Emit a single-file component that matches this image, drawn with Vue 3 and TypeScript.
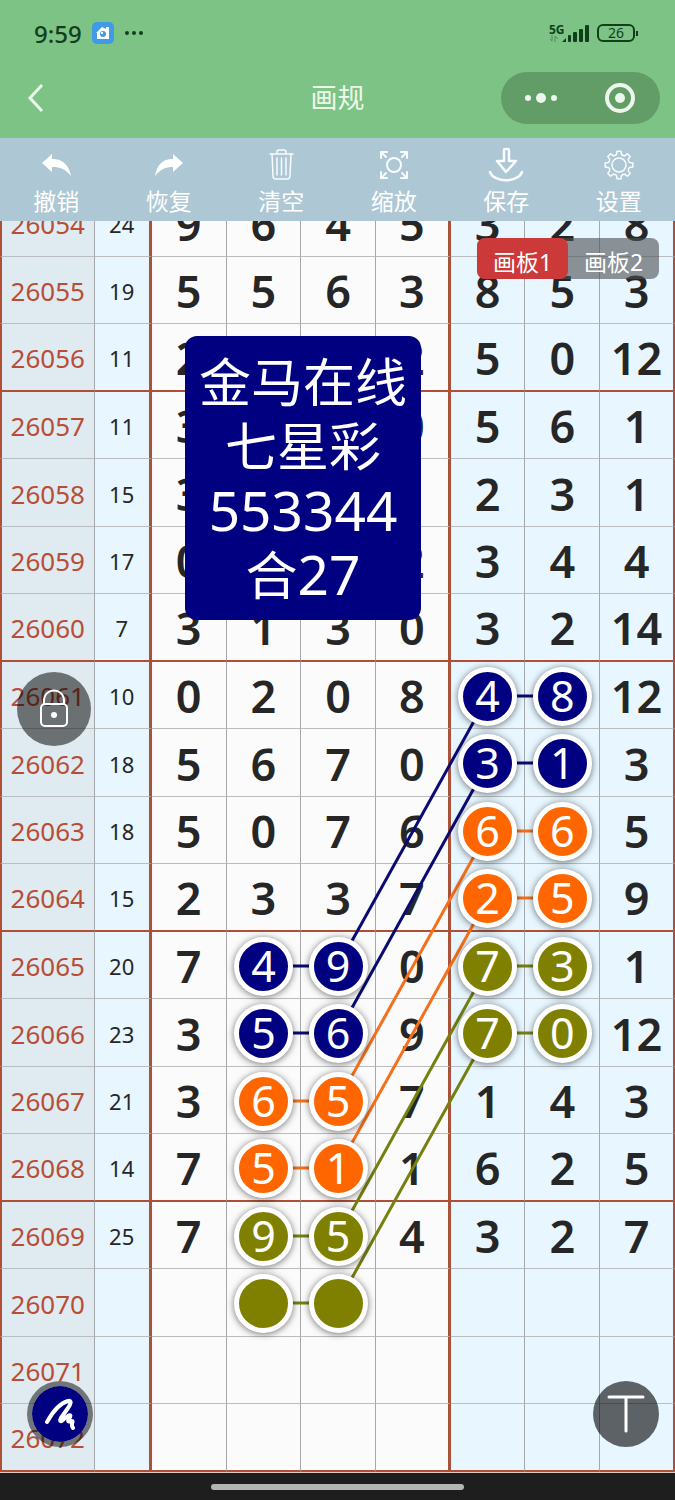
<script setup lang="ts">
import { ref } from 'vue'

type Tone = 'navy' | 'orange' | 'olive'

interface Row {
  id: string
  sum: string
  cells: string[]
}

interface Link {
  from: [number, number]
  to: [number, number]
  tone: Tone
}

const COLUMN_CENTERS = [188, 263, 338, 413, 488, 563, 638]
const ROW_PITCH = 67.5

const rows: Row[] = [
  { id: '26054', sum: '24', cells: ['9', '6', '4', '5', '3', '2', '8'] },
  { id: '26055', sum: '19', cells: ['5', '5', '6', '3', '8', '5', '3'] },
  { id: '26056', sum: '11', cells: ['2', '', '', '2', '5', '0', '12'] },
  { id: '26057', sum: '11', cells: ['3', '', '', '0', '5', '6', '1'] },
  { id: '26058', sum: '15', cells: ['3', '', '', '', '2', '3', '1'] },
  { id: '26059', sum: '17', cells: ['0', '', '', '2', '3', '4', '4'] },
  { id: '26060', sum: '7', cells: ['3', '1', '3', '0', '3', '2', '14'] },
  { id: '26061', sum: '10', cells: ['0', '2', '0', '8', '4', '8', '12'] },
  { id: '26062', sum: '18', cells: ['5', '6', '7', '0', '3', '1', '3'] },
  { id: '26063', sum: '18', cells: ['5', '0', '7', '6', '6', '6', '5'] },
  { id: '26064', sum: '15', cells: ['2', '3', '3', '7', '2', '5', '9'] },
  { id: '26065', sum: '20', cells: ['7', '4', '9', '0', '7', '3', '1'] },
  { id: '26066', sum: '23', cells: ['3', '5', '6', '9', '7', '0', '12'] },
  { id: '26067', sum: '21', cells: ['3', '6', '5', '7', '1', '4', '3'] },
  { id: '26068', sum: '14', cells: ['7', '5', '1', '1', '6', '2', '5'] },
  { id: '26069', sum: '25', cells: ['7', '9', '5', '4', '3', '2', '7'] },
  { id: '26070', sum: '', cells: ['', '', '', '', '', '', ''] },
  { id: '26071', sum: '', cells: ['', '', '', '', '', '', ''] },
  { id: '26072', sum: '', cells: ['', '', '', '', '', '', ''] },
]

// Each pair starts at a row and column and covers two neighbouring cells.
const pairs: { row: number; col: number; tone: Tone }[] = [
  { row: 7, col: 4, tone: 'navy' },
  { row: 8, col: 4, tone: 'navy' },
  { row: 9, col: 4, tone: 'orange' },
  { row: 10, col: 4, tone: 'orange' },
  { row: 11, col: 4, tone: 'olive' },
  { row: 12, col: 4, tone: 'olive' },
  { row: 11, col: 1, tone: 'navy' },
  { row: 12, col: 1, tone: 'navy' },
  { row: 13, col: 1, tone: 'orange' },
  { row: 14, col: 1, tone: 'orange' },
  { row: 15, col: 1, tone: 'olive' },
  { row: 16, col: 1, tone: 'olive' },
]

const links: Link[] = [
  ...pairs.map((p): Link => ({ from: [p.row, p.col], to: [p.row, p.col + 1], tone: p.tone })),
  ...pairs.slice(0, 6).map((p): Link => ({ from: [p.row, p.col], to: [p.row + 4, 2], tone: p.tone })),
]

function toneOf(row: number, col: number): Tone | undefined {
  return pairs.find((p) => p.row === row && (p.col === col || p.col + 1 === col))?.tone
}

const cx = (col: number) => COLUMN_CENTERS[col]
const cy = (row: number) => Math.round(ROW_PITCH * row + 34)

// Outline of an eight-toothed gear centred in a 36-unit box.
function gearPath(): string {
  const at = (radius: number, degrees: number) => {
    const a = (degrees * Math.PI) / 180
    return `${(18 + radius * Math.cos(a)).toFixed(2)} ${(18 + radius * Math.sin(a)).toFixed(2)}`
  }
  let d = ''
  for (let k = 0; k < 8; k++) {
    const a = k * 45
    d += `${k ? 'L' : 'M'}${at(11, a - 13)} L${at(14, a - 8)} L${at(14, a + 8)} L${at(11, a + 13)} `
    d += `Q${at(9.6, a + 22.5)} ${at(11, a + 32)} `
  }
  return d + 'Z'
}
const gear = gearPath()

const board = ref(1)
</script>

<template>
  <main class="screen">
    <header class="header">
      <div class="status">
        <div class="status-side">
          <span class="clock">9:59</span>
          <svg class="app-badge" viewBox="0 0 22 22" aria-hidden="true">
            <rect width="22" height="22" rx="5" fill="#3f9ae8" />
            <path d="M4 11 L10 5 L14 7 V5 H17 V17 H5 V11 Z" fill="#fff" />
            <circle cx="11" cy="12" r="3" fill="#3f9ae8" />
            <path d="M9 10 H11 V12 H9 Z" fill="#fff" />
          </svg>
          <svg class="more" viewBox="0 0 20 6" aria-hidden="true">
            <circle cx="3" cy="3" r="2" /><circle cx="10" cy="3" r="2" /><circle cx="17" cy="3" r="2" />
          </svg>
        </div>
        <div class="status-side right">
          <div class="network">
            <span class="net-label">5G</span>
            <svg class="arrows" viewBox="0 0 10 7" aria-hidden="true">
              <path d="M3 0 V6 L1 4 M6 7 V1 L9 4" fill="none" stroke="#4f8a58" />
            </svg>
          </div>
          <svg class="bars" viewBox="0 0 28 18" aria-hidden="true">
            <path d="M1 18 L5 14 V18 Z" />
            <rect x="7" y="11" width="3" height="7" rx="1" />
            <rect x="12" y="8" width="4" height="10" rx="1" />
            <rect x="18" y="5" width="4" height="13" rx="1" />
            <rect x="24" y="1" width="4" height="17" rx="1" />
          </svg>
          <span class="battery">26</span>
        </div>
      </div>
      <div class="nav">
        <button class="back" aria-label="返回">
          <svg viewBox="0 0 18 30" aria-hidden="true"><path d="M15 2 L3 15 L15 28" /></svg>
        </button>
        <h1>画规</h1>
        <div class="capsule">
          <button aria-label="更多">
            <svg class="dots" viewBox="0 0 32 10" aria-hidden="true">
              <circle cx="3" cy="5" r="3" /><circle cx="16" cy="5" r="5" /><circle cx="29" cy="5" r="3" />
            </svg>
          </button>
          <button aria-label="关闭">
            <svg class="target" viewBox="0 0 30 30" aria-hidden="true">
              <circle cx="15" cy="15" r="13" fill="none" stroke="#edf6ec" stroke-width="4" />
              <circle cx="15" cy="15" r="5" fill="#edf6ec" />
            </svg>
          </button>
        </div>
      </div>
    </header>

    <nav class="toolbar">
      <button>
        <svg viewBox="0 0 36 36" aria-hidden="true">
          <path class="solid" d="M4 16 L14 7 V12 C25 12 31 18 33 29 C27 22 23 20 14 20 V25 Z" />
        </svg>
        <span>撤销</span>
      </button>
      <button>
        <svg viewBox="0 0 36 36" aria-hidden="true">
          <path class="solid" d="M32 16 L22 7 V12 C11 12 6 18 4 29 C10 22 14 20 22 20 V25 Z" />
        </svg>
        <span>恢复</span>
      </button>
      <button>
        <svg class="fine" viewBox="0 0 36 36" aria-hidden="true">
          <path d="M7 7 H30 M14 7 V5 Q14 3 16 3 H21 Q23 3 23 5 V7 M9 7 L10 29 Q10 32 13 32 H24 Q27 32 27 29 L28 7 M14 11 V28 M18.500 11 V28 M23 11 V28" />
        </svg>
        <span>清空</span>
      </button>
      <button>
        <svg viewBox="0 0 36 36" aria-hidden="true">
          <circle cx="18" cy="18" r="7" />
          <path d="M5 11 V5 H11 M5 5 L10 10 M25 5 H31 V11 M31 5 L26 10 M5 25 V31 H11 M5 31 L10 26 M31 25 V31 H25 M31 31 L26 26" />
        </svg>
        <span>缩放</span>
      </button>
      <button>
        <svg viewBox="0 0 36 36" aria-hidden="true">
          <path class="bold" d="M16 3 Q16 2 18 2 H19 Q21 2 21 3 V14 H28 L18 25 L9 14 H16 Z M2 25 C6 36 30 36 34 25" />
        </svg>
        <span>保存</span>
      </button>
      <button>
        <svg class="fine" viewBox="0 0 36 36" aria-hidden="true">
          <circle cx="18" cy="18" r="7" />
          <path :d="gear" />
        </svg>
        <span>设置</span>
      </button>
    </nav>

    <section class="board">
      <div class="sheet">
        <table>
          <colgroup>
            <col class="col-id" />
            <col class="col-sum" />
            <col span="7" />
          </colgroup>
          <tbody>
            <tr v-for="(row, r) in rows" :key="row.id" :class="{ divider: r % 4 === 2 }">
              <th scope="row">{{ row.id }}</th>
              <td class="sum">{{ row.sum }}</td>
              <td v-for="(cell, c) in row.cells" :key="c" :class="{ tail: c > 3, edge: c === 3 || c === 6 }">
                <span v-if="toneOf(r, c)" class="ball" :class="toneOf(r, c)">{{ cell }}</span>
                <template v-else>{{ cell }}</template>
              </td>
            </tr>
          </tbody>
        </table>
        <svg class="links" viewBox="0 0 675 1283" preserveAspectRatio="none" aria-hidden="true">
          <line
            v-for="(link, i) in links"
            :key="i"
            :class="link.tone"
            :x1="cx(link.from[1])"
            :y1="cy(link.from[0])"
            :x2="cx(link.to[1])"
            :y2="cy(link.to[0])"
          />
        </svg>
      </div>

      <div class="tabs">
        <button :class="{ active: board === 1 }" @click="board = 1">画板1</button>
        <button :class="{ active: board === 2 }" @click="board = 2">画板2</button>
      </div>

      <div class="note">
        <p>金马在线</p>
        <p>七星彩</p>
        <p><span class="digits">553344</span></p>
        <p>合<span class="digits">27</span></p>
      </div>

      <button class="float lock" aria-label="锁定">
        <svg viewBox="0 0 30 40" aria-hidden="true">
          <path d="M5 15 V12 C5 -2 25 -2 25 12 V15" />
          <rect x="2" y="15" width="26" height="22" rx="4" />
          <circle cx="15" cy="26" r="3" />
        </svg>
      </button>
      <button class="float pen" aria-label="画笔">
        <svg viewBox="0 0 32 32" aria-hidden="true">
          <path d="M3 24 C8 15 16 5 24 3 C28 2 27 6 24 10 L17 20 C15 24 17 24 20 21 L24 18 C27 16 27 18 25 21 C23 24 25 24 28 23 C30 23 26 26 29 30" />
        </svg>
      </button>
      <button class="float text" aria-label="文字">
        <svg viewBox="0 0 38 38" aria-hidden="true"><path d="M2 2 H36 M19 2 V36" /></svg>
      </button>
    </section>

    <footer class="home"><span></span></footer>
  </main>
</template>

<style>
body {
  margin: 0;
}
</style>

<style scoped>
.screen {
  display: flex;
  flex-direction: column;
  min-height: 100vh;
  background: #fbfbfb;
  font-family: "Noto Sans", "Noto Sans CJK SC", sans-serif;
  color: #262626;
}
button {
  margin: 0;
  padding: 0;
  border: 0;
  background: none;
  color: inherit;
  font: inherit;
  cursor: pointer;
}
.header {
  background: #7dc385;
}
.status {
  display: flex;
  justify-content: space-between;
  align-items: center;
  height: 58px;
  padding: 8px 40px 0 34px;
  box-sizing: border-box;
  color: #123f1b;
}
.status-side {
  display: flex;
  align-items: center;
  gap: 10px;
}
.status-side.right {
  gap: 8px;
}
.clock {
  font-size: 24px;
  font-weight: 500;
}
.app-badge {
  width: 22px;
  height: 22px;
}
.more {
  width: 20px;
  height: 6px;
  fill: #123f1b;
}
.network {
  display: flex;
  flex-direction: column;
  width: 18px;
  margin-right: -14px;
}
.net-label {
  font-size: 12px;
  line-height: 11px;
  font-weight: 700;
}
.arrows {
  width: 10px;
  height: 7px;
}
.bars {
  width: 28px;
  height: 18px;
  fill: #123f1b;
}
.battery {
  position: relative;
  width: 34px;
  border: 2px solid #123f1b;
  border-radius: 6px;
  font-size: 14px;
  line-height: 14px;
  text-align: center;
}
.battery::after {
  content: "";
  position: absolute;
  top: 5px;
  right: -5px;
  width: 2px;
  height: 5px;
  background: #123f1b;
}
.nav {
  display: grid;
  grid-template-columns: 1fr auto 1fr;
  align-items: center;
  height: 80px;
  padding: 0 15px;
}
.back {
  display: flex;
  justify-self: start;
  padding-left: 12px;
}
.back svg {
  width: 18px;
  height: 30px;
  fill: none;
  stroke: #edf8ea;
  stroke-width: 3;
}
h1 {
  margin: 0;
  color: #edf8ea;
  font-size: 27px;
  font-weight: 400;
  line-height: 40px;
}
.capsule {
  display: flex;
  justify-self: end;
  width: 159px;
  height: 52px;
  border-radius: 26px;
  background: #629d68;
}
.capsule button {
  display: flex;
  flex: 1;
  align-items: center;
  justify-content: center;
}
.dots {
  width: 32px;
  height: 10px;
  fill: #edf6ec;
}
.target {
  width: 30px;
  height: 30px;
}
.toolbar {
  position: relative;
  z-index: 3;
  display: grid;
  grid-template-columns: repeat(6, 1fr);
  height: 83px;
  background: #adc7d4;
  color: #fff;
}
.toolbar button {
  display: flex;
  flex-direction: column;
  align-items: center;
  padding-top: 9px;
  font-size: 23px;
  line-height: 36px;
}
.toolbar svg {
  width: 36px;
  height: 36px;
  flex: none;
  fill: none;
  stroke: #f8fcff;
  stroke-width: 2;
  stroke-linejoin: round;
  stroke-linecap: round;
}
.toolbar svg.fine {
  stroke-width: 1.5;
}
.toolbar .solid {
  fill: #fff;
  stroke: none;
}
.toolbar .bold {
  stroke-width: 2.5;
}
.board {
  position: relative;
  flex: 1;
  overflow: hidden;
}
.sheet {
  position: relative;
  margin-top: -32px;
}
table {
  width: 100%;
  table-layout: fixed;
  border-collapse: separate;
  border-spacing: 0;
}
.col-id {
  width: 14%;
}
.col-sum {
  width: 8.5%;
}
tr {
  height: 67px;
}
tr:nth-child(odd) {
  height: 68px;
}
th,
td {
  box-sizing: border-box;
  padding: 2px 0 0;
  border-right: 1px solid #a4a8aa;
  border-bottom: 1px solid #b9bdbf;
  text-align: center;
  vertical-align: middle;
  font-size: 45px;
  line-height: 60px;
  font-weight: 600;
}
th {
  border-left: 2px solid #b04f36;
  background: #e0eaf1;
  color: #b84d36;
  font-size: 26px;
  font-weight: 400;
}
td.sum {
  border-right: 3px solid #a9523a;
  background: #e7f6ff;
  font-size: 22px;
  font-weight: 400;
}
td.tail {
  background: #e7f6ff;
}
td.edge {
  border-right: 3px solid #a9523a;
}
td.edge:last-child {
  border-right-width: 2px;
}
.divider th,
.divider td {
  border-bottom: 2px solid #b04f36;
}
.ball {
  position: relative;
  z-index: 2;
  display: block;
  box-sizing: border-box;
  width: 59px;
  height: 59px;
  margin: 0 auto;
  border: 5px solid #fff;
  border-radius: 50%;
  box-shadow: 0 1px 7px rgba(0, 0, 0, 0.55);
  color: #fff;
  font-weight: 400;
  font-size: 43px;
  line-height: 48px;
}
.ball.navy {
  background: #000080;
}
.ball.orange {
  background: #ff6600;
}
.ball.olive {
  background: #808000;
}
.links {
  position: absolute;
  z-index: 1;
  inset: 0;
  width: 100%;
  height: 100%;
  pointer-events: none;
}
.links line {
  stroke-width: 3;
  vector-effect: non-scaling-stroke;
}
.links .navy {
  stroke: #0a0a72;
}
.links .orange {
  stroke: #f5701c;
}
.links .olive {
  stroke: #75800f;
}
.tabs {
  position: absolute;
  z-index: 3;
  top: 17px;
  right: 16px;
  display: flex;
  border-radius: 8px;
  background: rgba(75, 78, 82, 0.6);
  color: #fff;
  font-size: 23px;
  line-height: 41px;
}
.tabs button {
  height: 41px;
  width: 91px;
  padding-top: 4px;
  border-radius: 8px;
}
.tabs .active {
  background: #cc3939;
}
.note {
  position: absolute;
  z-index: 3;
  top: 115px;
  left: 185px;
  padding: 14px;
  border-radius: 12px;
  background: #000080;
  color: #fff;
  font-size: 52px;
  line-height: 64px;
  text-align: center;
}
.note p {
  margin: 0;
  height: 64px;
}
.digits {
  font-size: 55px;
}
.float {
  position: absolute;
  z-index: 3;
  display: flex;
  align-items: center;
  justify-content: center;
  box-sizing: border-box;
  width: 66px;
  height: 66px;
  border-radius: 50%;
  background: rgba(0, 0, 0, 0.6);
}
.float svg {
  width: 38px;
  height: 38px;
  fill: none;
  stroke: #fff;
  stroke-width: 3;
  stroke-linecap: round;
  stroke-linejoin: round;
}
.lock {
  top: 451px;
  left: 17px;
  width: 74px;
  height: 74px;
  background: rgba(0, 0, 0, 0.52);
}
.lock svg {
  width: 30px;
  height: 40px;
  stroke-width: 2;
}
.lock svg circle {
  fill: #fff;
  stroke: none;
}
.pen {
  bottom: 25px;
  left: 27px;
  border: 5px solid rgba(0, 0, 0, 0.5);
  background: #000080;
  background-clip: padding-box;
}
.pen svg {
  width: 32px;
  height: 32px;
  stroke-width: 4;
}
.text {
  right: 16px;
  bottom: 25px;
}
.home {
  display: flex;
  align-items: center;
  justify-content: center;
  height: 28px;
  box-sizing: border-box;
  border-top: 1px solid #dcc9c5;
  background: #1e1e1e;
}
.home span {
  width: 253px;
  height: 6px;
  border-radius: 3px;
  background: #b4b4b4;
}
</style>
